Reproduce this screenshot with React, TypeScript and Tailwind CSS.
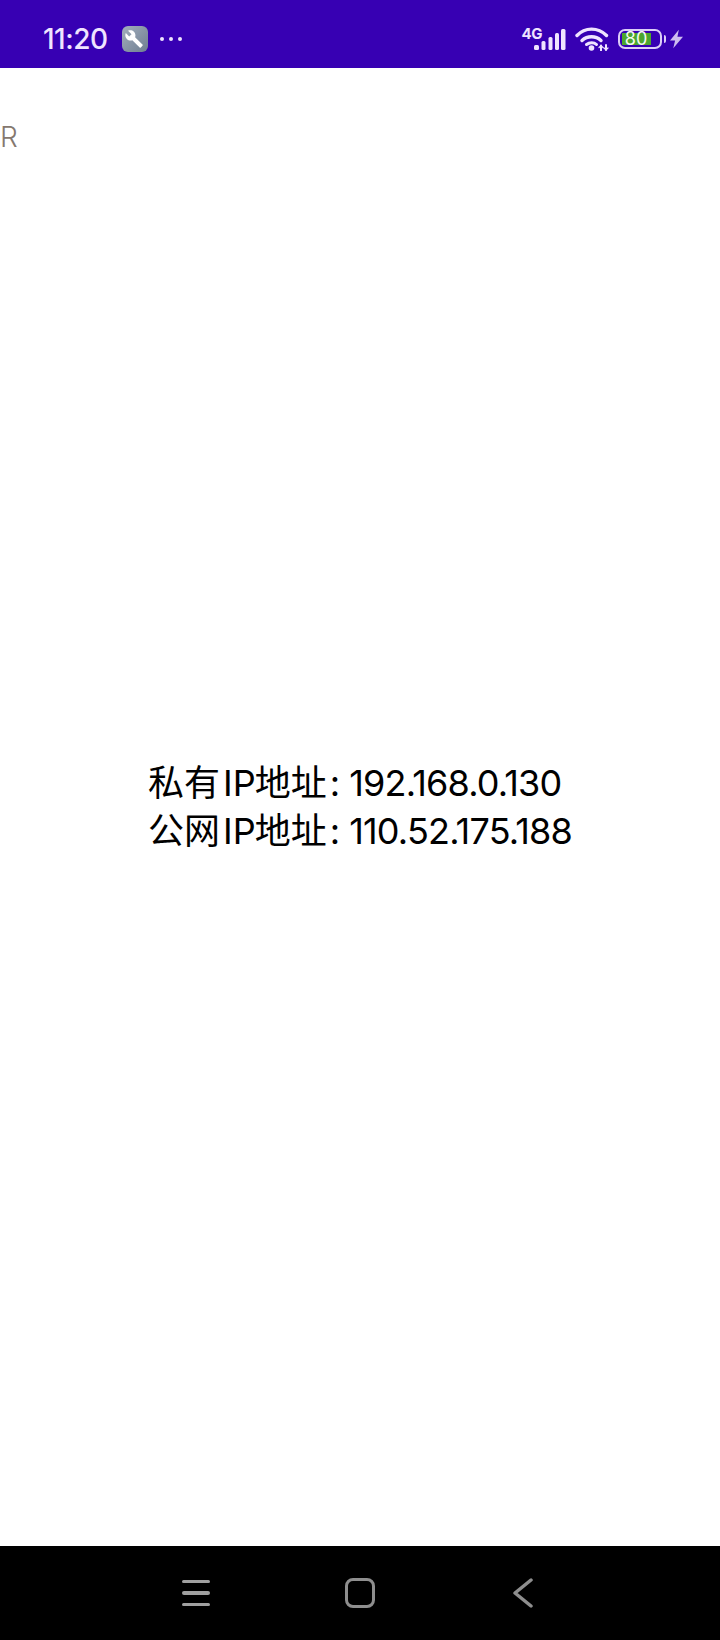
import React from "react";

const font = { fontFamily: '"Inter", "Noto Sans CJK SC", sans-serif' };

function SignalIcon() {
  return (
    <div className="relative h-[24px] w-[44px]">
      <span className="absolute left-0 top-0 text-[15px] font-bold leading-[13px] tracking-[-0.5px] text-[#efe4ff]">4G</span>
      <svg viewBox="0 0 44 24" className="h-[24px] w-[44px]" fill="#efe4ff">
        <rect x="12" y="18" width="5" height="5" rx="1.500" />
        <rect x="19.500" y="14" width="4" height="9" rx="1.500" />
        <rect x="26.500" y="10" width="4" height="13" rx="1.500" />
        <rect x="33" y="6" width="4" height="17" rx="1.500" />
        <rect x="39" y="2" width="4.500" height="21" rx="1.500" />
      </svg>
    </div>
  );
}

function WifiIcon() {
  return (
    <svg viewBox="0 0 34 25" className="h-[25px] w-[34px] -translate-y-[1px]" fill="none" stroke="#efe4ff" strokeLinecap="round">
      <path d="M2 9.500C10 1 23 1 31.500 9.500" strokeWidth="3.400" />
      <path d="M7 14.500C12.500 9.500 20.500 9.500 26 14.500" strokeWidth="3.400" />
      <path d="M11.500 18.500C14.500 16 19 16 21.500 18.500" strokeWidth="3" />
      <circle cx="16.500" cy="22" r="2.800" fill="#efe4ff" stroke="none" />
      <path d="M26 19.500v5M31 19v5" strokeWidth="2" />
      <path d="M24 21.500l2-2 2 2M29 22l2 2 2-2" strokeWidth="1.200" />
    </svg>
  );
}

function BatteryIcon() {
  return (
    <div className="flex items-center gap-[2px]">
      <div className="flex h-[20px] w-[44px] items-center rounded-[7px] border-2 border-[#dccdf8] p-[2px]">
        <div className="flex h-full w-[29px] items-center justify-center bg-[#4ca52e] text-[18px] leading-none text-[#f4faee]">
          80
        </div>
      </div>
      <div className="h-[8px] w-[2.500px] rounded-r-sm bg-[#dccdf8]" />
    </div>
  );
}

function AddressLine({ cjk, value }: { cjk: string; value: string }) {
  return (
    <div className="whitespace-nowrap">
      {cjk}
      <span className="ml-[3px] mr-[-1px]">IP</span>
      地址
      <span className="ml-[3px] mr-[-1px]">:</span>{" "}
      <span className="tracking-[-0.8px]">{value}</span>
    </div>
  );
}

export default function App() {
  return (
    <div className="flex h-[1640px] w-[720px] flex-col bg-white" style={font}>
      <header className="flex h-[68px] items-center justify-between bg-[#3700b3] pl-[43px] pr-[37px] pt-[10px] text-[#efe4ff]">
        <div className="flex items-center">
          <span className="text-[28px] font-medium leading-none tracking-[-0.5px]">11:20</span>
          <div className="ml-[14px] flex h-[26px] w-[26px] items-center justify-center rounded-[6px] bg-gradient-to-br from-[#a3aebd] to-[#6f7f91]">
            <svg viewBox="0 0 24 24" className="h-[20px] w-[20px]" fill="#ffffff">
              <path d="M21 19.600 11.700 10.300c.9-2.300.4-5-1.500-6.900C8.200 1.400 5.200 1 2.800 2.100l4.400 4.400-3 3L0 5.200c-1.200 2.400-.7 5.400 1.300 7.400 1.900 1.900 4.600 2.400 6.900 1.500l9.300 9.300c.4.400 1 .4 1.400 0l2.100-2.400c.5-.3.5-1 0-1.400z" transform="translate(1 0) scale(.95)" />
            </svg>
          </div>
          <div className="ml-[12px] flex gap-[5px]">
            <span className="h-[4px] w-[4px] rounded-full bg-[#efe4ff]" />
            <span className="h-[4px] w-[4px] rounded-full bg-[#efe4ff]" />
            <span className="h-[4px] w-[4px] rounded-full bg-[#efe4ff]" />
          </div>
        </div>
        <div className="flex items-center">
          <SignalIcon />
          <div className="ml-[9px]"><WifiIcon /></div>
          <div className="ml-[9px]"><BatteryIcon /></div>
          <svg viewBox="0 0 14 20" className="ml-[4px] h-[20px] w-[13px]" fill="#cdbcf0">
            <path d="M9.500 0 0 11.500h5.500L3.500 20 14 7.500H8z" />
          </svg>
        </div>
      </header>

      <main className="grid flex-1 grid-rows-[1fr_auto_1fr]">
        <div className="pt-[53px] text-[28px] font-light leading-[32px] text-[#85786f]">R</div>
        <div className="flex justify-center">
          <div className="text-[36px] leading-[48px] text-black">
            <AddressLine cjk="私有" value="192.168.0.130" />
            <AddressLine cjk="公网" value="110.52.175.188" />
          </div>
        </div>
        <div />
      </main>

      <nav className="flex h-[94px] items-center bg-black">
        <div className="ml-[182px] flex w-[28px] flex-col gap-[8px]">
          <span className="h-[3.500px] rounded-full bg-[#a0a0a0]" />
          <span className="h-[3.500px] rounded-full bg-[#a0a0a0]" />
          <span className="h-[3.500px] rounded-full bg-[#a0a0a0]" />
        </div>
        <div className="ml-[135px] h-[30px] w-[30px] rounded-[8px] border-[3.500px] border-[#8e8e8e]" />
        <svg viewBox="0 0 20 30" className="ml-[138px] h-[30px] w-[20px]" fill="none" stroke="#8e8e8e" strokeWidth="3.500" strokeLinecap="round" strokeLinejoin="round">
          <path d="M18 2 2 15l16 13" />
        </svg>
      </nav>
    </div>
  );
}
